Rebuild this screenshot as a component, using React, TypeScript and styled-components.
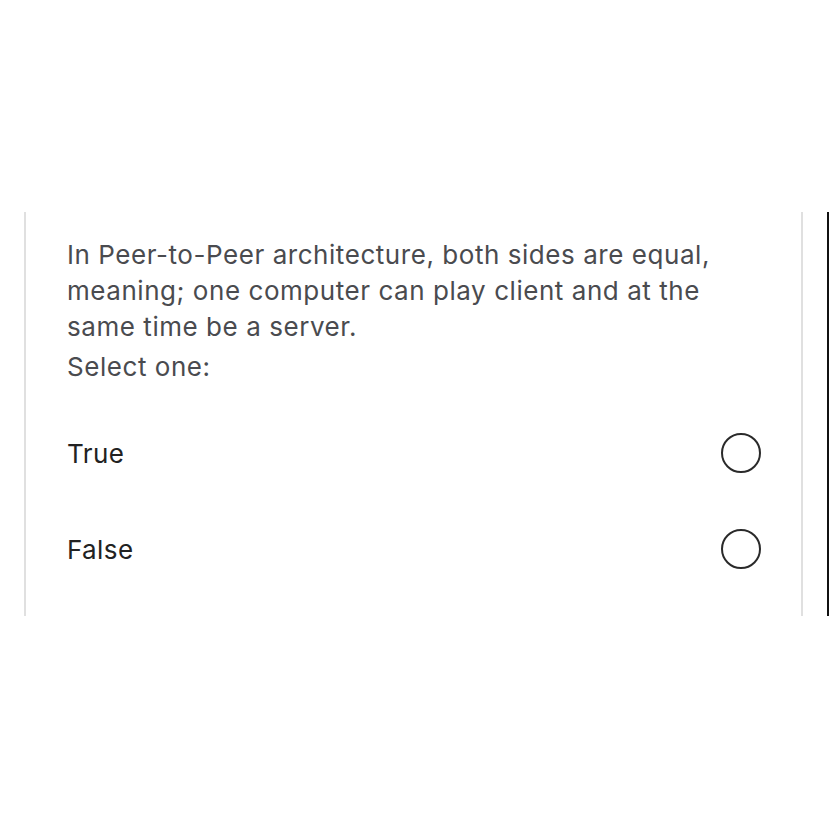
import * as React from 'react';
import styled, { createGlobalStyle } from 'styled-components';

const GlobalStyle = createGlobalStyle`
  html, body {
    margin: 0;
    padding: 0;
    background: #fff;
  }
  body {
    font-family: Inter, 'Liberation Sans', Arial, sans-serif;
  }
`;

const Page = styled.div`
  padding-top: 212px;
  padding-left: 24px;
  width: 829px;
  height: 829px;
  box-sizing: border-box;
`;

const Frame = styled.div`
  display: flex;
  border-right: 2px solid #111;
`;

const Card = styled.div`
  width: 779px;
  box-sizing: border-box;
  border-left: 2px solid #e0e0e0;
  border-right: 2px solid #e0e0e0;
  padding: 25px 40px 19px 41px;
  margin-right: 24px;
`;

const Question = styled.p`
  margin: 0;
  font-size: 26px;
  letter-spacing: 0.55px;
  line-height: 36px;
  color: #4a4b4f;
`;

const Prompt = styled.p`
  margin: 4px 0 20px;
  font-size: 26px;
  letter-spacing: 0.55px;
  line-height: 36px;
  color: #4a4b4f;
`;

const Option = styled.label`
  display: flex;
  align-items: center;
  justify-content: space-between;
  height: 96px;
  font-size: 26px;
  letter-spacing: 0.4px;
  color: #222;
  cursor: pointer;
`;

const Radio = styled.span`
  width: 40px;
  height: 40px;
  box-sizing: border-box;
  border: 2px solid #2a2a2a;
  border-radius: 50%;
`;

const options = ['True', 'False'];

const App: React.FC = () => (
  <Page>
    <GlobalStyle />
    <Frame>
      <Card>
        <Question>
          In Peer-to-Peer architecture, both sides are equal, meaning; one computer can play client and at the same time be a server.
        </Question>
        <Prompt>Select one:</Prompt>
        {options.map((o) => (
          <Option key={o}>
            <span>{o}</span>
            <Radio />
          </Option>
        ))}
      </Card>
    </Frame>
  </Page>
);

export default App;
